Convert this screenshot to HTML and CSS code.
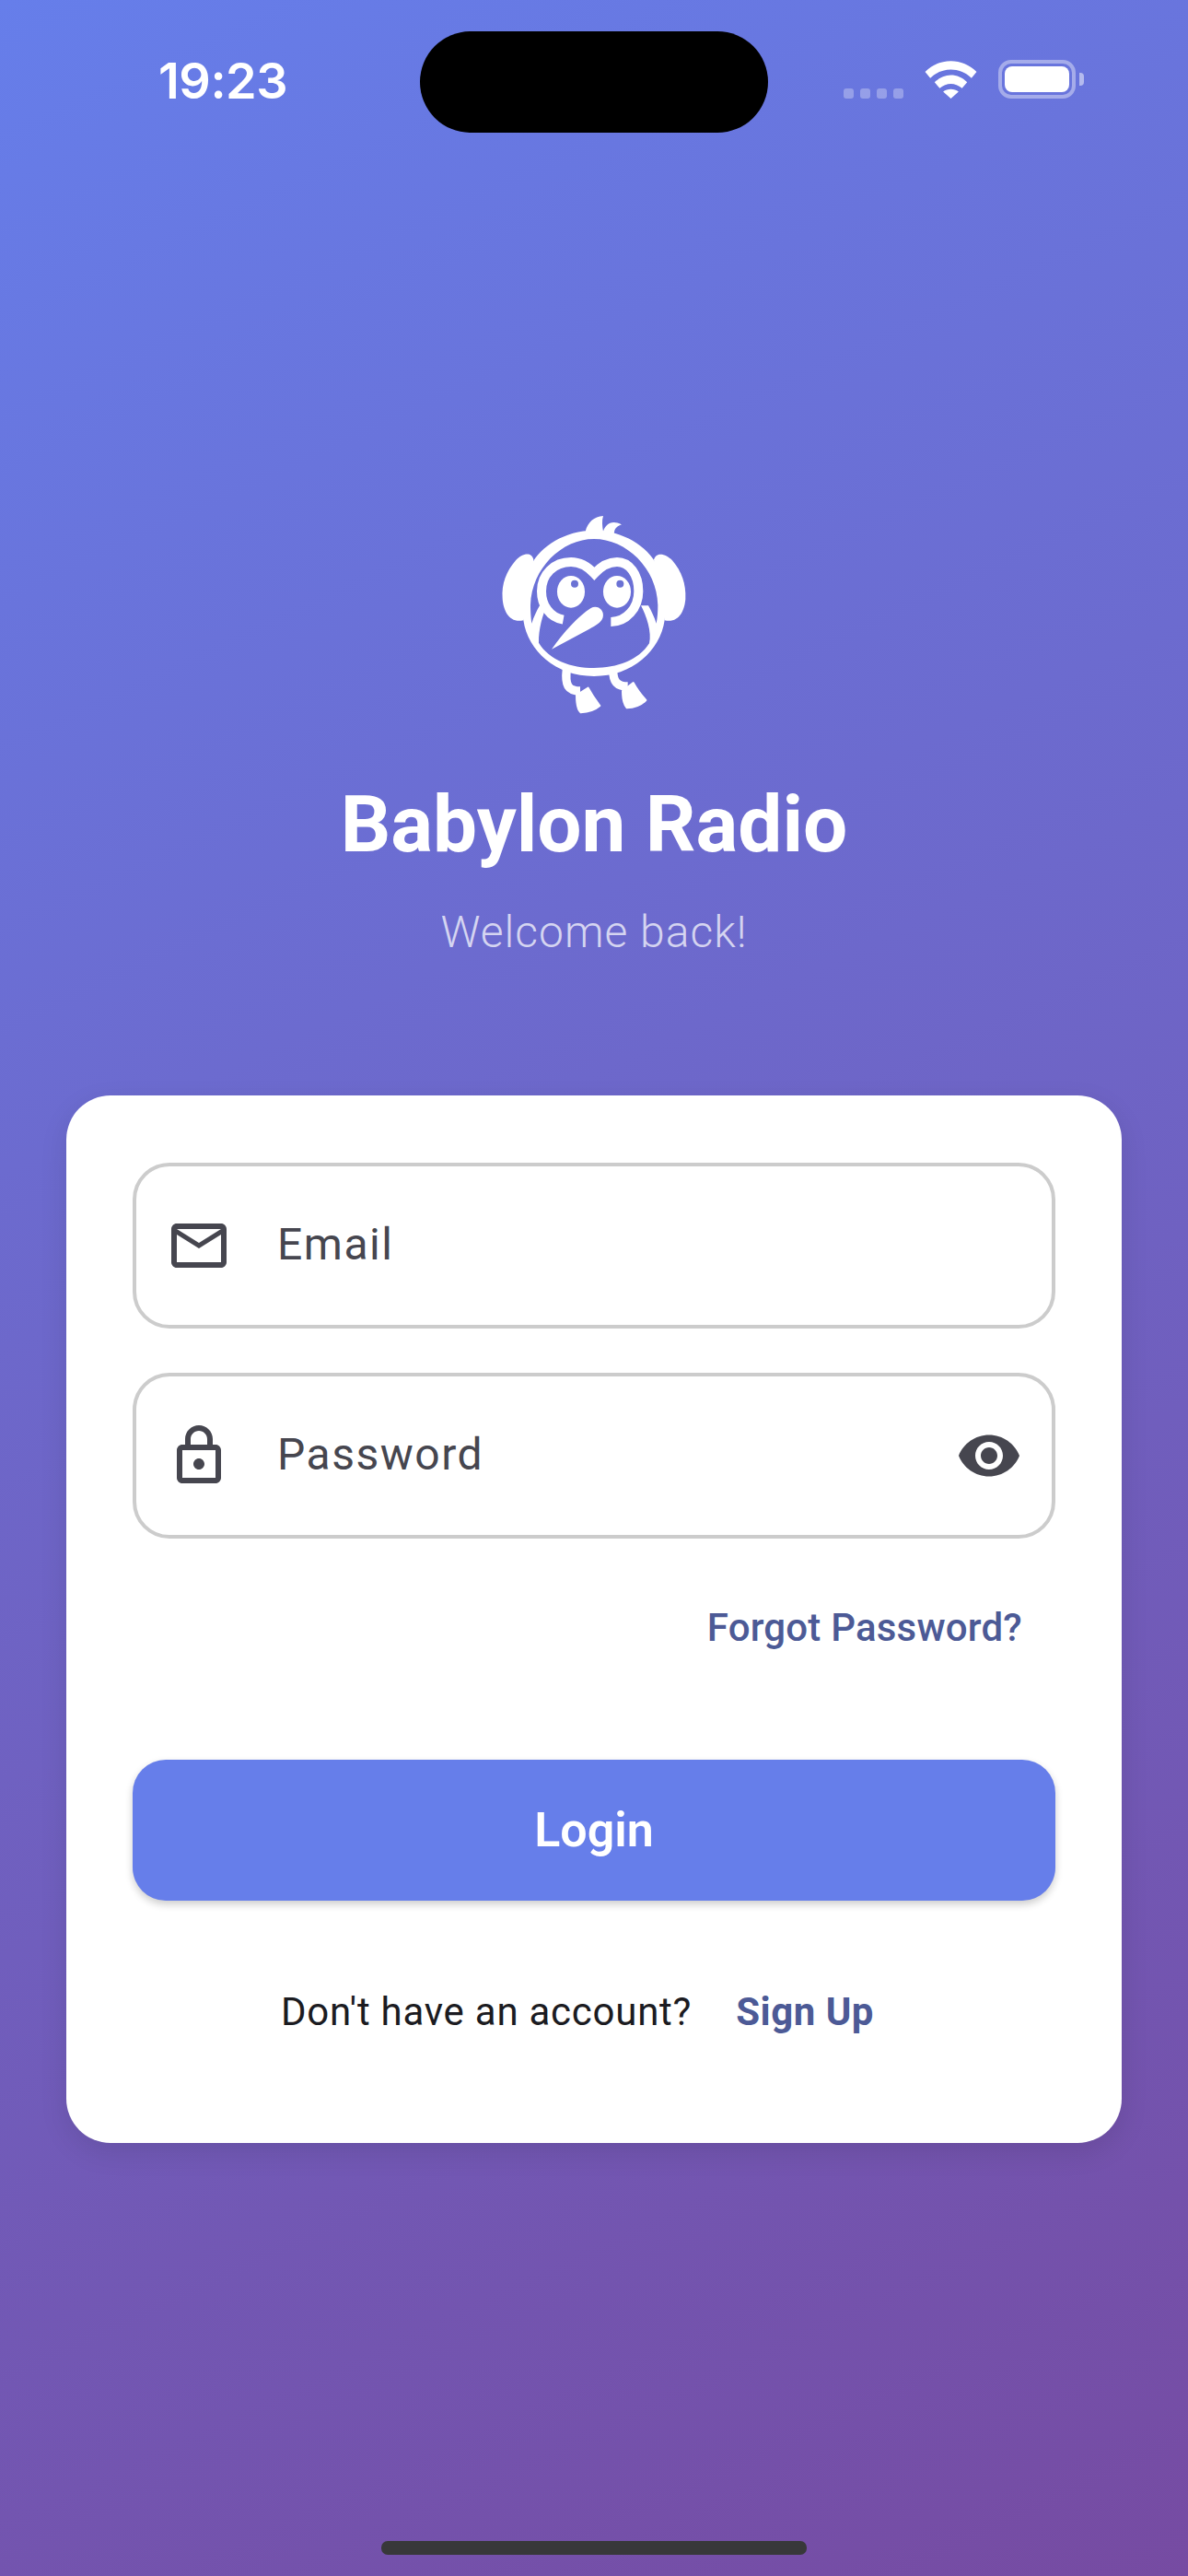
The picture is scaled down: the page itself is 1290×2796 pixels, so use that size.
FILE: index.html
```html
<!DOCTYPE html>
<html>
<head>
    <meta charset="utf-8">
    <title>Babylon Radio</title>
    <link rel="stylesheet" href="styles.css">
</head>
<body>
    <div class="screen">
        <div class="status-bar">
            <span class="time">19:23</span>
            <div class="island"></div>
            <div class="indicators">
                <div class="signal"><i></i><i></i><i></i><i></i></div>
                <svg class="wifi" viewBox="0 0 60 44"><path fill="#fff" d="M0 13 C16 -4 44 -4 60 13 L54 20 C40 7 20 7 6 20 Z M11 25 C22 14 38 14 49 25 L43 32 C35 25 25 25 17 32 Z M21 36 C26 32 34 32 39 36 L30 44 Z"/></svg>
                <div class="battery"><div class="battery-level"></div></div>
                <div class="battery-cap"></div>
            </div>
        </div>

        <div class="brand">
            <svg class="logo" viewBox="0 0 870 780">
                <path fill="#fff" d="M238 232 C232 205 200 212 180 235 C150 270 133 310 137 360 C140 400 160 440 205 430 L230 300 Z"/>
                <path fill="#fff" d="M630 232 C640 205 670 215 690 235 C720 270 735 310 733 360 C730 400 710 440 665 430 L640 300 Z"/>
                <path fill="#fff" d="M407 140 C415 110 435 92 465 90 C460 105 462 125 465 140 C472 120 490 100 525 118 C505 125 500 135 500 155 Z"/>
                <path fill="#fff" fill-rule="evenodd" d="M435 137 C530 137 610 190 640 250 C665 300 670 400 665 430 C650 530 560 612 435 612 C310 612 220 530 205 430 C200 400 205 300 230 250 C260 190 340 137 435 137 Z M435 165 C330 165 232 260 228 380 C228 400 230 425 232 440 C238 420 248 400 258 382 L282 382 C268 410 254 460 255 503 C290 560 360 585 435 585 C510 585 580 560 615 505 C624 470 606 415 588 382 L612 382 C622 400 632 420 638 440 C642 420 643 400 643 380 C640 260 540 165 435 165 Z"/>
                <path fill="none" stroke="#fff" stroke-width="30" d="M335 428 C290 420 264 380 264 335 C264 280 305 240 360 240 C390 240 415 255 436 278 C457 255 485 240 510 240 C550 240 580 280 580 335 C580 390 540 435 490 435"/>
                <ellipse fill="#fff" cx="360" cy="337" rx="45" ry="52"/>
                <ellipse fill="#fff" cx="510" cy="337" rx="45" ry="52"/>
                <circle fill="#6b72d4" cx="372" cy="311" r="12"/>
                <circle fill="#6b72d4" cx="520" cy="311" r="12"/>
                <path fill="#fff" d="M297 524 C335 470 385 415 425 390 C445 378 470 395 464 420 C460 437 440 447 420 458 Z"/>
                <path fill="none" stroke="#fff" stroke-width="28" d="M346 590 C340 640 350 660 390 660 M497 590 C497 630 510 645 545 645"/>
                <path fill="#fff" stroke="#fff" stroke-width="6" stroke-linejoin="round" d="M378 674 L416 650 C428 672 442 692 454 708 C438 722 410 729 392 730 C381 722 378 700 378 674 Z"/>
                <path fill="#fff" stroke="#fff" stroke-width="6" stroke-linejoin="round" d="M528 660 L563 633 C573 652 588 672 604 690 C588 707 565 714 542 715 C533 705 528 685 528 660 Z"/>
            </svg>
            <h1 class="title">Babylon Radio</h1>
            <p class="subtitle">Welcome back!</p>
        </div>

        <div class="card">
            <div class="field">
                <svg class="icon" viewBox="0 0 24 24"><path fill="#46464f" d="M22 6c0-1.100-.9-2-2-2H4c-1.100 0-2 .9-2 2v12c0 1.100.9 2 2 2h16c1.100 0 2-.9 2-2V6zm-2 0l-8 5-8-5h16zm0 12H4V8l8 5 8-5v10z"/></svg>
                <span class="field-label">Email</span>
            </div>
            <div class="field">
                <svg class="icon" viewBox="0 0 24 24"><path fill="#46464f" d="M18 8h-1V6c0-2.760-2.240-5-5-5S7 3.240 7 6v2H6c-1.100 0-2 .9-2 2v10c0 1.100.9 2 2 2h12c1.100 0 2-.9 2-2V10c0-1.100-.9-2-2-2zM9 6c0-1.660 1.340-3 3-3s3 1.340 3 3v2H9V6zm9 14H6V10h12v10zm-6-3c1.100 0 2-.9 2-2s-.9-2-2-2-2 .9-2 2 .9 2 2 2z"/></svg>
                <span class="field-label">Password</span>
                <svg class="icon eye" viewBox="0 0 24 24"><path fill="#46464f" d="M12 4.500C7 4.500 2.730 7.610 1 12c1.730 4.390 6 7.500 11 7.500s9.270-3.110 11-7.500c-1.730-4.390-6-7.500-11-7.500zM12 17c-2.760 0-5-2.240-5-5s2.240-5 5-5 5 2.240 5 5-2.240 5-5 5zm0-8c-1.660 0-3 1.340-3 3s1.340 3 3 3 3-1.340 3-3-1.340-3-3-3z"/></svg>
            </div>
            <div class="forgot-row"><a class="forgot">Forgot Password?</a></div>
            <button class="login">Login</button>
            <div class="signup-row">
                <span class="signup-text">Don't have an account?</span>
                <a class="signup">Sign Up</a>
            </div>
        </div>

        <div class="home-indicator"></div>
    </div>
</body>
</html>
```

FILE: styles.css
```css
* {
    box-sizing: border-box;
}
html,
body {
    margin: 0;
    padding: 0;
}
body {
    font-family: "Roboto", "Liberation Sans", sans-serif;
}
.screen {
    display: flex;
    flex-direction: column;
    width: 1290px;
    height: 2796px;
    background: linear-gradient(155deg, #667eea 0%, #764ba2 100%);
    overflow: hidden;
}

/* status bar */
.status-bar {
    display: grid;
    grid-template-columns: 1fr 378px 1fr;
    align-items: center;
    height: 110px;
    margin-top: 34px;
}
.time {
    padding-left: 172px;
    padding-bottom: 4px;
    font-family: "Inter", sans-serif;
    font-size: 54px;
    font-weight: 600;
    letter-spacing: -0.5px;
    color: #fff;
}
.island {
    height: 110px;
    border-radius: 55px;
    background: #000;
}
.indicators {
    display: flex;
    align-items: flex-end;
    justify-content: flex-end;
    height: 42px;
    margin-top: -6px;
    padding-right: 113px;
}
.signal {
    display: flex;
    gap: 7px;
    margin-right: 23px;
}
.signal i {
    display: block;
    width: 11px;
    height: 11px;
    border-radius: 3px;
    background: rgba(255, 255, 255, 0.3);
}
.wifi {
    width: 57px;
    height: 41px;
    margin-right: 23px;
}
.battery {
    width: 84px;
    height: 42px;
    padding: 3px;
    border: 4px solid rgba(255, 255, 255, 0.4);
    border-radius: 14px;
}
.battery-level {
    width: 100%;
    height: 100%;
    border-radius: 8px;
    background: #fff;
}
.battery-cap {
    align-self: center;
    width: 5px;
    height: 14px;
    margin-left: 4px;
    border-radius: 0 4px 4px 0;
    background: rgba(255, 255, 255, 0.5);
}

/* logo and title */
.brand {
    display: flex;
    flex-direction: column;
    align-items: center;
    margin-top: 386px;
}
.logo {
    width: 290px;
    height: 260px;
}
.title {
    margin: 55px 0 0;
    font-size: 85.500px;
    font-weight: 700;
    line-height: 100px;
    color: #fff;
}
.subtitle {
    margin: 39px 0 0;
    font-size: 48px;
    font-weight: 300;
    line-height: 56px;
    letter-spacing: 1px;
    color: rgba(255, 255, 255, 0.72);
}

/* login card */
.card {
    width: 1146px;
    height: 1137px;
    margin: 149px 0 0 72px;
    padding: 73px 72px 72px;
    border-radius: 48px;
    background: #fff;
    box-shadow: 0 10px 30px rgba(0, 0, 0, 0.1);
}
.field {
    display: flex;
    align-items: center;
    height: 180px;
    margin-bottom: 48px;
    padding: 0 32px;
    border: 4px solid #cccccc;
    border-radius: 40px;
}
.icon {
    flex: none;
    width: 72px;
    height: 72px;
}
.field-label {
    flex: 1;
    margin-left: 49px;
    padding-bottom: 3px;
    font-size: 48px;
    letter-spacing: 1.5px;
    color: #46464f;
}
.forgot-row {
    display: flex;
    justify-content: flex-end;
    padding-right: 36px;
    margin-top: 72px;
}
.forgot {
    font-size: 42px;
    font-weight: 500;
    line-height: 50px;
    letter-spacing: 0.2px;
    color: #4c5a96;
}
.login {
    display: block;
    width: 100%;
    height: 153px;
    margin-top: 118px;
    border: 0;
    border-radius: 36px;
    background: #667eea;
    box-shadow: 0 4px 8px rgba(0, 0, 0, 0.2);
    font-family: inherit;
    font-size: 52px;
    font-weight: 600;
    color: #fff;
}
.signup-row {
    display: flex;
    justify-content: center;
    align-items: center;
    gap: 48px;
    margin-top: 96px;
    padding-right: 36px;
    line-height: 50px;
}
.signup-text {
    font-size: 42px;
    letter-spacing: 0.75px;
    color: #1b1b21;
}
.signup {
    font-size: 42px;
    font-weight: 700;
    letter-spacing: 0.5px;
    color: #4c5a96;
}

/* home indicator */
.home-indicator {
    width: 462px;
    height: 15px;
    margin: 432px auto 0;
    border-radius: 7px;
    background: #38383a;
}
```
